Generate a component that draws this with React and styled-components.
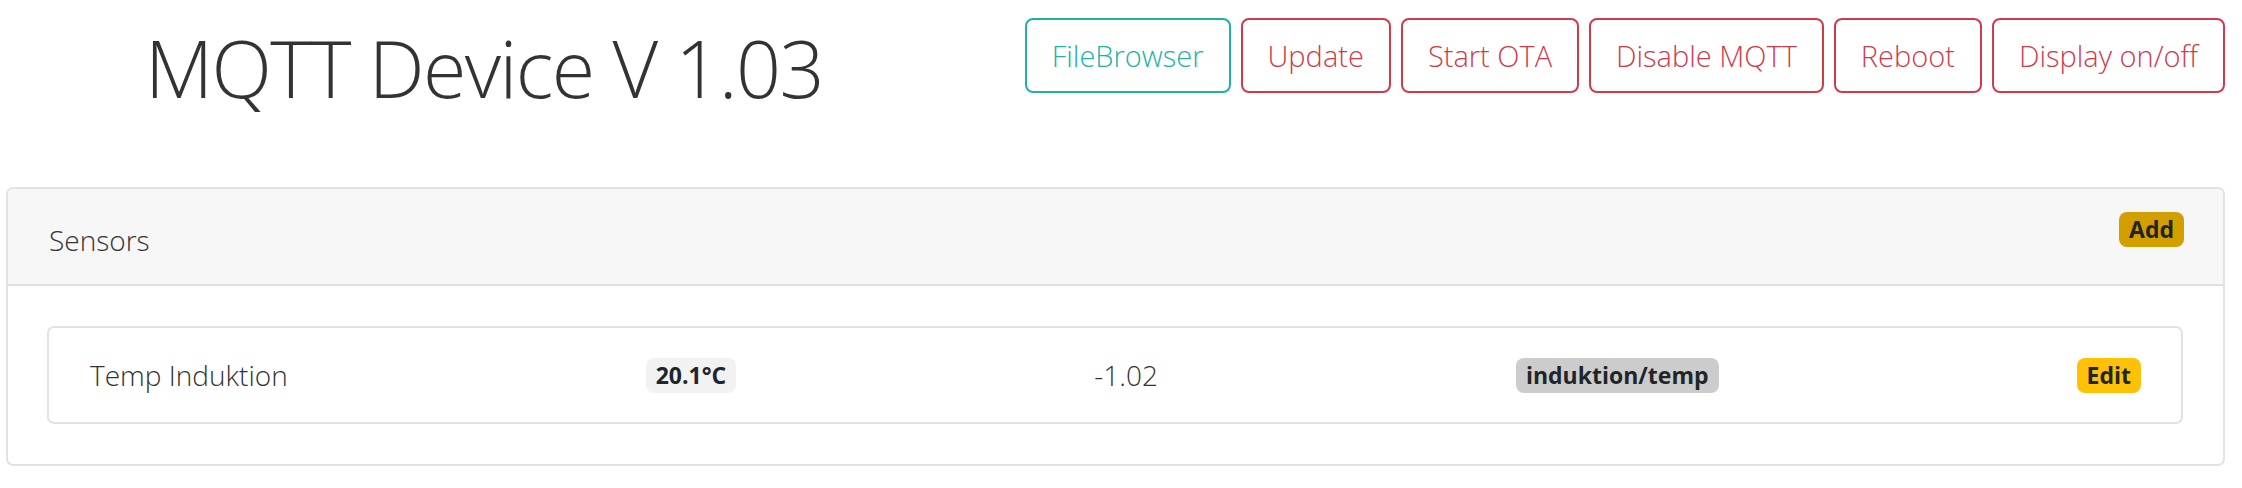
import React from "react";
import styled, { createGlobalStyle } from "styled-components";

const Global = createGlobalStyle`
  html, body { margin: 0; padding: 0; background: #fff; }
  body { font-family: "Open Sans", "Noto Sans", sans-serif; color: #333; }
`;

const Page = styled.div`
  padding: 0 17px 0 6px;
`;

const Header = styled.header`
  display: flex;
  align-items: flex-start;
  height: 187px;
`;

const TitleCol = styled.div`
  flex: 0 0 956px;
  text-align: center;
`;

const Title = styled.h1`
  margin: 0;
  padding-top: 20px;
  font-size: 79px;
  font-weight: 300;
  letter-spacing: -1.6px;
  line-height: 96px;
  color: #333;
  white-space: nowrap;
`;

const Actions = styled.div`
  margin-left: auto;
  margin-top: 18px;
  display: flex;
  gap: 10px;
`;

const OutlineButton = styled.button`
  font-family: inherit;
  font-size: 29px;
  font-weight: 300;
  line-height: 45px;
  padding: 13px 25px;
  border: 2px solid ${(p) => p.$color};
  color: ${(p) => p.$color};
  background: transparent;
  border-radius: 8px;
  white-space: nowrap;
  cursor: pointer;
`;

const Card = styled.section`
  border: 2px solid #e2e2e2;
  border-radius: 7px;
  overflow: hidden;
`;

const CardHeader = styled.div`
  display: flex;
  justify-content: space-between;
  align-items: flex-start;
  height: 97px;
  box-sizing: border-box;
  padding: 23px 39px 0 41px;
  background: #f7f7f7;
  border-bottom: 2px solid #e0e0e0;
`;

const CardTitle = styled.span`
  font-size: 28px;
  font-weight: 300;
  line-height: 40px;
  margin-top: 8px;
  color: #333;
`;

const CardBody = styled.div`
  padding: 40px 40px 40px 39px;
`;

const SensorRow = styled.div`
  display: flex;
  justify-content: space-between;
  align-items: center;
  height: 98px;
  box-sizing: border-box;
  padding: 0 40px 0 41px;
  border: 2px solid #e2e2e2;
  border-radius: 7px;
`;

const Cell = styled.span`
  font-size: 28px;
  font-weight: 300;
  color: #333;
`;

const Badge = styled.span`
  display: inline-block;
  font-size: 23px;
  font-weight: 700;
  line-height: 35px;
  padding: 0 10px;
  border-radius: 8px;
  background: ${(p) => p.$bg};
  color: #212529;
  white-space: nowrap;
`;

const buttons = [
  { label: "FileBrowser", color: "#20b2a5" },
  { label: "Update", color: "#d03a4a" },
  { label: "Start OTA", color: "#d03a4a" },
  { label: "Disable MQTT", color: "#d03a4a" },
  { label: "Reboot", color: "#d03a4a" },
  { label: "Display on/off", color: "#d03a4a" },
];

export default function App() {
  return (
    <>
      <Global />
      <Page>
        <Header>
          <TitleCol>
            <Title>MQTT Device V 1.03</Title>
          </TitleCol>
          <Actions>
            {buttons.map((b) => (
              <OutlineButton key={b.label} $color={b.color}>
                {b.label}
              </OutlineButton>
            ))}
          </Actions>
        </Header>
        <Card>
          <CardHeader>
            <CardTitle>Sensors</CardTitle>
            <Badge $bg="#d39e00">Add</Badge>
          </CardHeader>
          <CardBody>
            <SensorRow>
              <Cell>Temp Induktion</Cell>
              <Badge $bg="#f2f2f2">20.1°C</Badge>
              <Cell>-1.02</Cell>
              <Badge $bg="#cccccc">induktion/temp</Badge>
              <Badge $bg="#ffc107">Edit</Badge>
            </SensorRow>
          </CardBody>
        </Card>
      </Page>
    </>
  );
}
